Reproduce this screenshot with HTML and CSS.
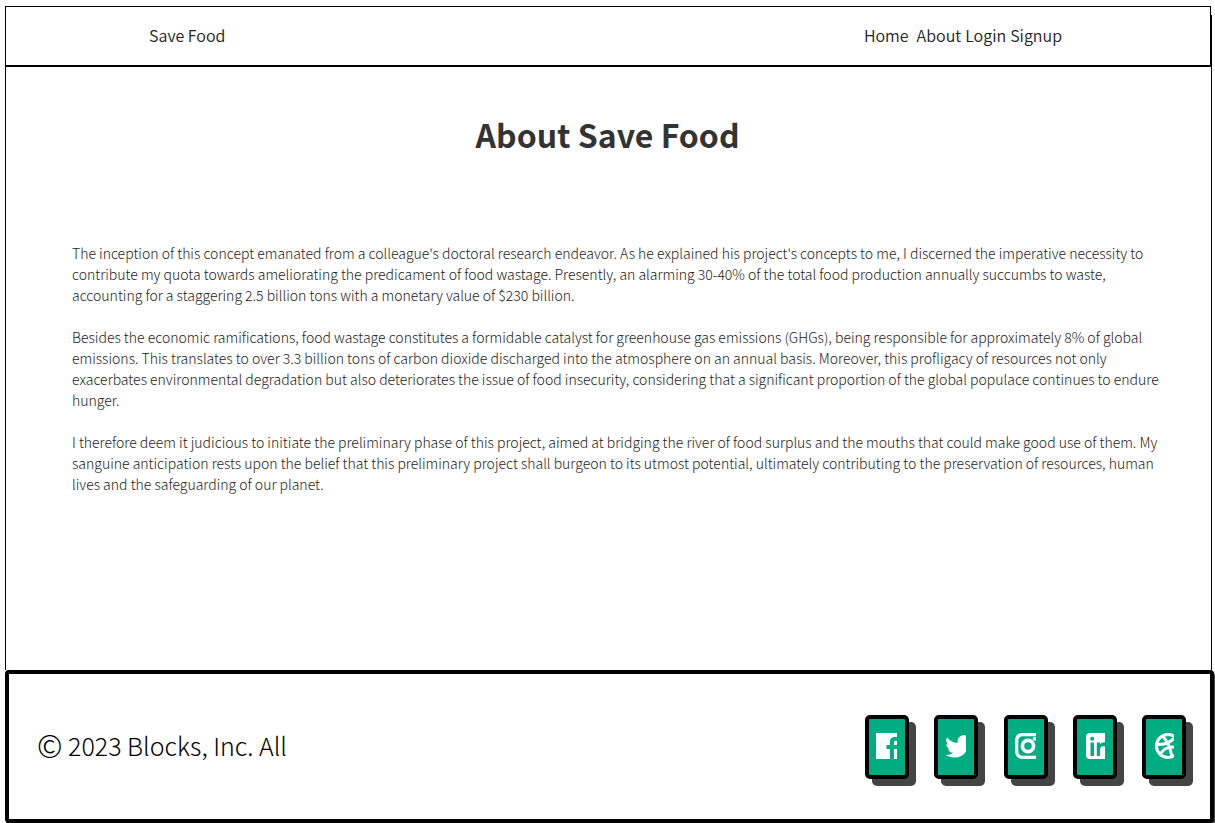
FILE: index.html
```
<!DOCTYPE html>
<html lang="en">
<head>
<meta charset="utf-8">
<title>About Save Food</title>
<link rel="stylesheet" href="styles.css">
</head>
<body>
<header class="nav">
  <a class="brand" href="#">Save Food</a>
  <nav class="links">
    <a class="home" href="#">Home</a>
    <a href="#">About</a>
    <a href="#">Login</a>
    <a href="#">Signup</a>
  </nav>
</header>
<main class="about">
  <h1>About Save Food</h1>
  <div class="copy">
    <p>The inception of this concept emanated from a colleague's doctoral research endeavor. As he explained his project's concepts to me, I discerned the imperative necessity to contribute my quota towards ameliorating the predicament of food wastage. Presently, an alarming 30-40% of the total food production annually succumbs to waste, accounting for a staggering 2.5 billion tons with a monetary value of $230 billion.</p>
    <p>Besides the economic ramifications, food wastage constitutes a formidable catalyst for greenhouse gas emissions (GHGs), being responsible for approximately 8% of global emissions. This translates to over 3.3 billion tons of carbon dioxide discharged into the atmosphere on an annual basis. Moreover, this profligacy of resources not only exacerbates environmental degradation but also deteriorates the issue of food insecurity, considering that a significant proportion of the global populace continues to endure hunger.</p>
    <p>I therefore deem it judicious to initiate the preliminary phase of this project, aimed at bridging the river of food surplus and the mouths that could make good use of them. My sanguine anticipation rests upon the belief that this preliminary project shall burgeon to its utmost potential, ultimately contributing to the preservation of resources, human lives and the safeguarding of our planet.</p>
  </div>
</main>
<footer class="footer">
  <p class="copyright"><span class="mark">©</span> 2023 Blocks, Inc. All</p>
  <div class="social">
    <a class="tile" href="#" aria-label="Facebook"><svg viewBox="3 3 14.538 18"><path fill="#fff" d="M15.402 21v-6.966h2.333l.349-2.708h-2.682V9.598c0-.784.218-1.319 1.342-1.319h1.434V5.857a19.190 19.190 0 0 0-2.090-.107c-2.067 0-3.482 1.262-3.482 3.580v1.996h-2.338v2.708h2.338V21H3V3h18v18z"/></svg></a>
    <a class="tile" href="#" aria-label="Twitter"><svg viewBox="0 0 21 26"><path fill="#fff" d="M21 2.500v16c-2.500 4-6.500 6-11.500 6-3.500 0-6.500-1-9-2.500 3 .2 5.500-.5 7.500-2.200-2.500-.1-4.200-1.500-5-3.600h2.300C2.700 15.500 1.200 13.500 1.200 11c.8.400 1.500.6 2.400.7C1.200 10 .6 7 2 4.400c2.800 3.400 6.300 5.200 10.700 5.500C12 5.600 14.700 2.400 18 2.200c1.200 0 2.200.100 3 .3z"/></svg></a>
    <a class="tile" href="#" aria-label="Instagram"><svg viewBox="0 0 21 26"><path d="M22 1.700H8Q1.700 1.700 1.700 8v10q0 6.300 6.300 6.300h14" fill="none" stroke="#fff" stroke-width="3.200"/><circle cx="13" cy="13" r="5.600" fill="none" stroke="#fff" stroke-width="3.600"/><circle cx="19.600" cy="5.800" r="1.900" fill="#fff"/></svg></a>
    <a class="tile" href="#" aria-label="LinkedIn"><svg viewBox="0 0 21 26"><path fill="#fff" d="M6 0h15v26H6q-4 0-4-4V4q0-4 4-4z"/><circle cx="8.200" cy="5.700" r="2" fill="#00ad83"/><path fill="#00ad83" d="M6.500 9.500H10V23H6.500zM12.800 9.500h3.300v2c1-1.600 2.500-2.400 4.900-2.200v4.200c-3.300-1-4.900.5-4.900 3.500v6h-3.300z"/></svg></a>
    <a class="tile" href="#" aria-label="Dribbble"><svg viewBox="0 0 21 26"><g fill="none" stroke="#fff" stroke-width="3"><circle cx="15" cy="13" r="11.500"/><path d="M9.500 3c5 5 8 12 9.500 21M3.500 11.500C12 12 18 9.500 22 4M7 22c3-6 9-9 16-7.500"/></g></svg></a>
  </div>
</footer>
</body>
</html>
```
FILE: styles.css
```
* { box-sizing: border-box; }
body {
  margin: 0;
  padding: 6px 1px 0 5px;
  min-height: 100vh;
  display: flex;
  flex-direction: column;
  font-family: "Noto Sans CJK SC", "Noto Sans", sans-serif;
  background: #fff;
  color: #000;
}
a { color: inherit; text-decoration: none; }
.nav {
  display: flex;
  justify-content: space-between;
  align-items: center;
  height: 61px;
  margin-right: 3px;
  padding: 0 148px 3px 143px;
  border: 1px solid #000;
  border-bottom-width: 2px;
  box-shadow: 1px 9px 0 #000;
  background: #fff;
  font-size: 16px;
  font-weight: 350;
  color: #222;
}
.links { display: flex; gap: 4px; }
.home { margin-right: 4px; }
.about {
  flex: 1;
  margin-right: 2px;
  padding: 41px 45px 0 66px;
  border: solid #000;
  border-width: 0 1px;
  background: #fff;
}
h1 {
  margin: 0 23px 83px 0;
  text-align: center;
  font-size: 32px;
  line-height: 52px;
  color: #333;
}
.copy {
  display: flex;
  flex-direction: column;
  gap: 21px;
  font-size: 14px;
  line-height: 21px;
  font-weight: 300;
  color: #222;
}
p { margin: 0; }
.footer {
  display: flex;
  justify-content: space-between;
  align-items: center;
  height: 153px;
  padding: 0 24px 0 28px;
  border: 4px solid #000;
  border-radius: 4px;
  box-shadow: 1px 2px 0 #444;
  background: #fff;
}
.copyright { padding-bottom: 3px; font-size: 25px; line-height: 36px; font-weight: 300; }
.mark { font-size: 31px; line-height: 1; vertical-align: -2px; }
.social { display: flex; justify-content: space-between; width: 321px; }
.tile {
  display: flex;
  align-items: center;
  width: 44px;
  height: 64px;
  padding: 0 7px 2px;
  border: 4px solid #000;
  border-radius: 5px;
  background: #00ad83;
  box-shadow: 7px 7px 0 #444;
}
.tile svg { flex: none; width: 21px; height: 26px; overflow: hidden; }
```
